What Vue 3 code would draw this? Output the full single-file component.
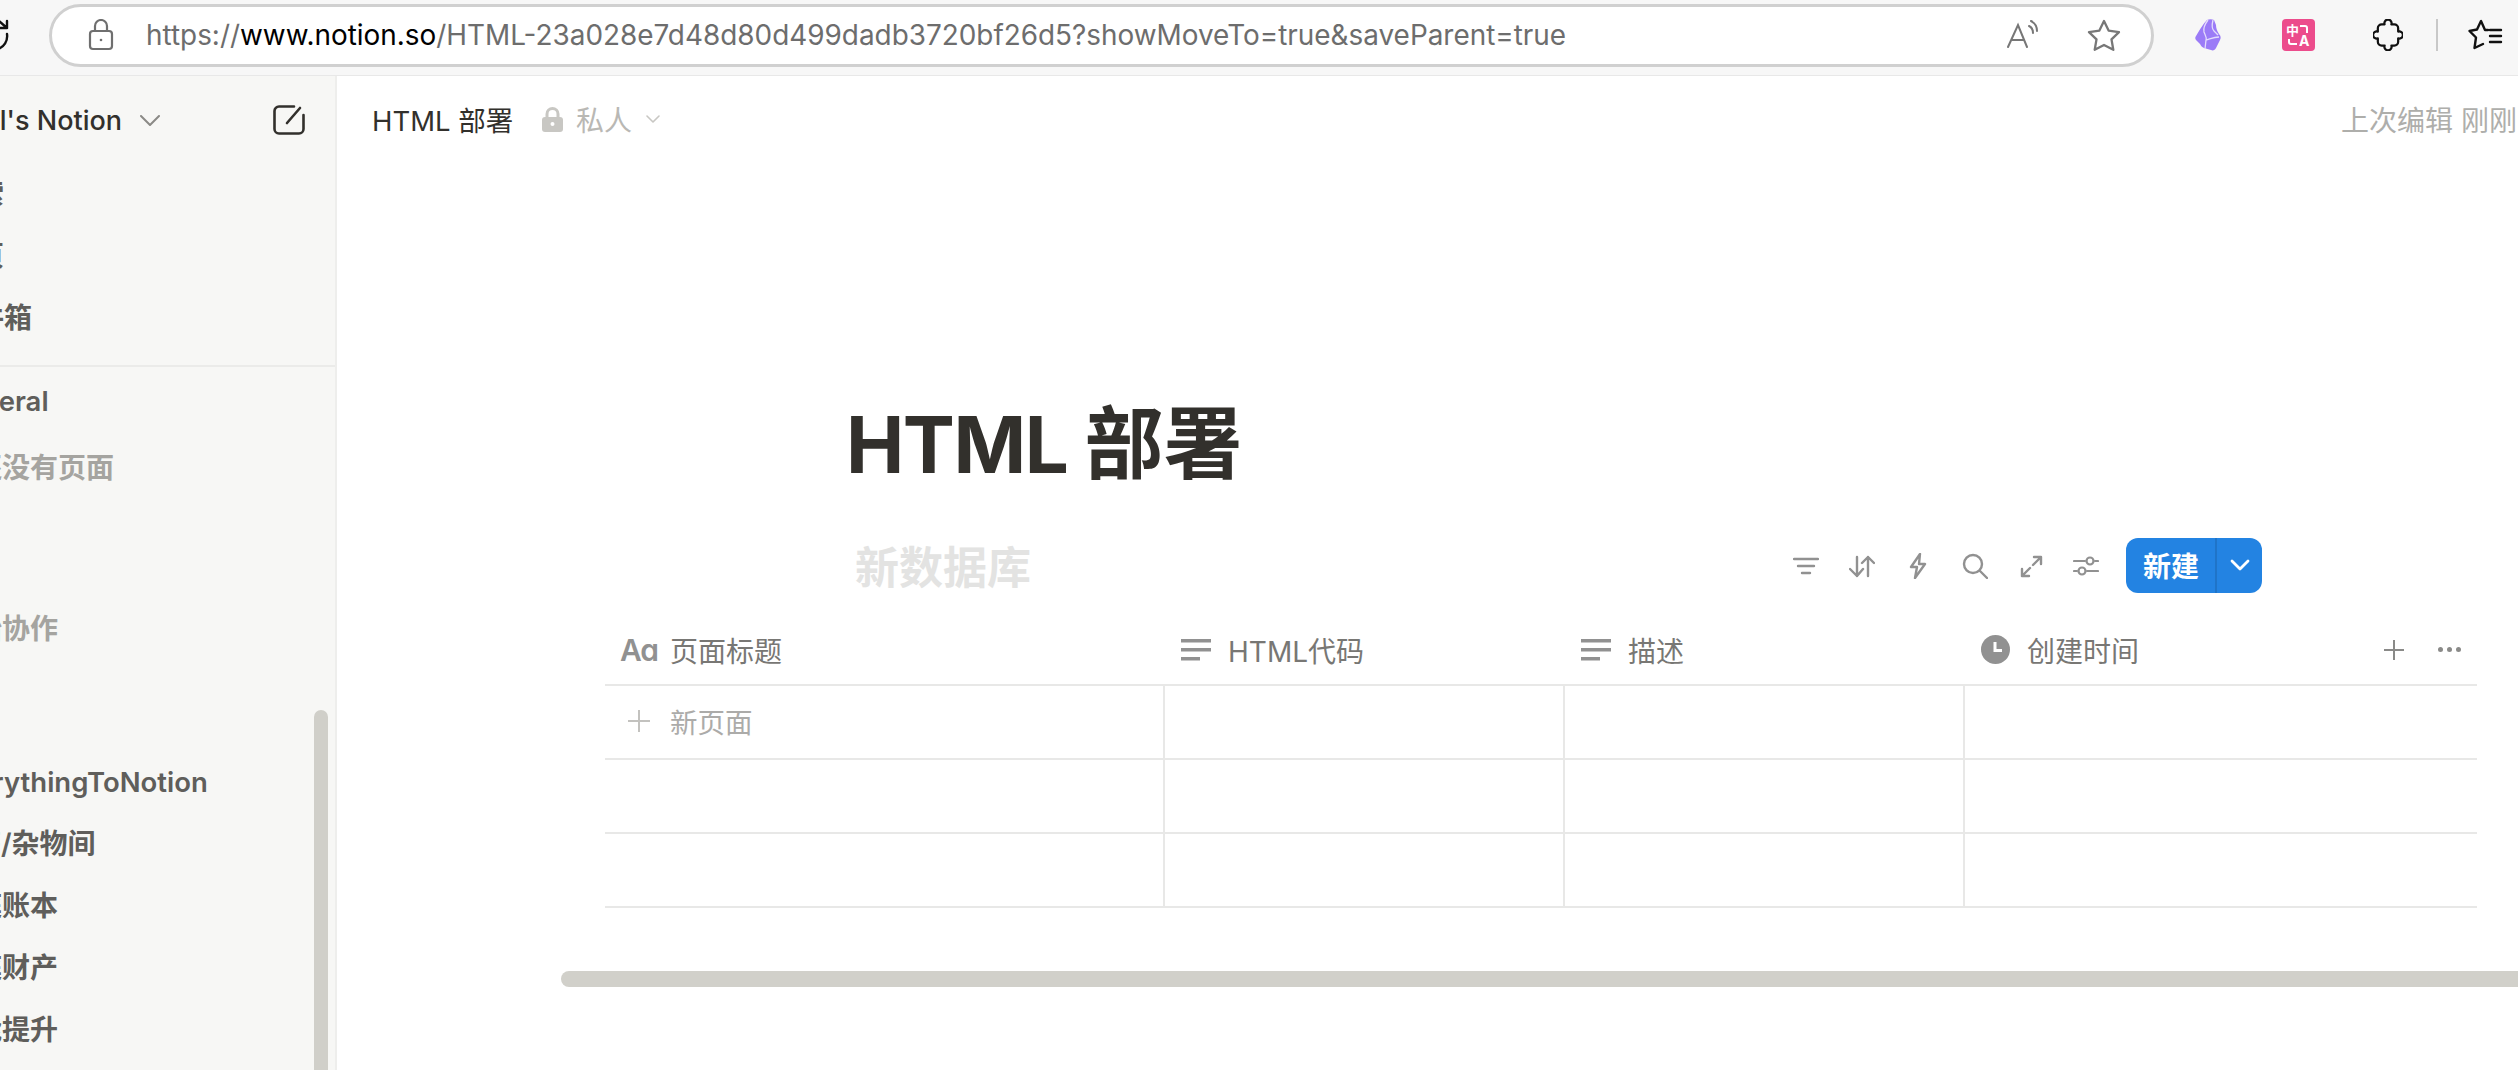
<script setup>
const columns = [
  { name: '页面标题', icon: 'aa', width: 560 },
  { name: 'HTML代码', icon: 'lines', width: 400 },
  { name: '描述', icon: 'lines', width: 400 },
  { name: '创建时间', icon: 'clock', width: 512 }
]
const rows = [0, 1, 2]
const lowerNav = [
  { text: 'EverythingToNotion', kind: 'latin' },
  { text: '书籍/杂物间', kind: 'slash' },
  { text: '家庭账本', kind: '' },
  { text: '家庭财产', kind: '' },
  { text: '技能提升', kind: '' }
]
</script>

<template>
  <div class="page">
    <header class="browser">
      <svg class="reload" width="16" height="30" viewBox="0 0 16 30" fill="none" stroke="#111" stroke-width="2.4" stroke-linecap="round" stroke-linejoin="round">
        <path d="M-1 0 7 7M7 0v7h-8" />
        <path d="M7 13c1 7-3 13-9 15" />
      </svg>
      <div class="pill">
        <svg class="lock" width="26" height="32" viewBox="0 0 26 32" fill="none" stroke="#6f6f6f" stroke-width="2.2">
          <rect x="2" y="12" width="22" height="18" rx="3" />
          <path d="M7 12V7a6 6 0 0 1 12 0v5" />
          <circle cx="13" cy="21" r="1.3" fill="#6f6f6f" stroke="none" />
        </svg>
        <div class="url"><span>https://</span><b>www.notion.so</b><span>/HTML-23a028e7d48d80d499dadb3720bf26d5?showMoveTo=true&amp;saveParent=true</span></div>
        <svg class="read" width="32" height="30" viewBox="0 0 32 30" fill="none" stroke="#777" stroke-width="2" stroke-linecap="round">
          <path d="M1 27 11 5l9 22M5 20h12" />
          <path d="M22 6c2 1 4 3 4 7M24 1c4 2 6 6 6 10" />
        </svg>
        <svg class="star" width="34" height="32" viewBox="0 0 34 32" fill="none" stroke="#777" stroke-width="2.3" stroke-linejoin="round">
          <path d="m17 2 4.600 9.600 10.400 1.500-7.500 7.300 1.800 10.400L17 25.900 7.700 30.800l1.800-10.400L2 13.100l10.400-1.500z" />
        </svg>
      </div>
      <svg class="ext obsidian" width="26" height="32" viewBox="0 0 26 32">
        <path d="M12 1c2-1 5-1 7 0l2 5c0 3 1 6 3 9 2 2 2 4 1 6l-4 8c-1 2-3 3-5 2l-7-2c-2-1-3-2-4-4l-4-4c-1-1-1-3 0-4l3-5c2-3 4-7 8-11z" fill="#9b7bf7" />
        <path d="M13 1c-3 4-5 8-4 12 1 3 3 5 2 8M11 21c4-1 8-3 13-3M11 21l-1 9M18 1c-1 4-2 8 1 11l4 4" fill="none" stroke="#e4dcfc" stroke-width="1.300" />
      </svg>
      <div class="ext translate">
        <svg class="brackets" width="33" height="32" viewBox="0 0 33 32" fill="none" stroke="#fff" stroke-width="2">
          <path d="M18 7h5a2 2 0 0 1 2 2v5" />
          <path d="M7 20v3a2 2 0 0 0 2 2h6" />
        </svg>
        <span class="zh">中</span><span class="en">A</span>
      </div>
      <svg class="ext puzzle" width="30" height="32" viewBox="-1 0 31 32" fill="none" stroke="#111" stroke-width="2.3" stroke-linejoin="round">
        <path d="M8 5h3a3.700 3.700 0 1 1 7 0h3a4 4 0 0 1 4 4v3.500a3.700 3.700 0 1 1 0 7V23a4 4 0 0 1-4 4h-3a3.700 3.700 0 1 1-7 0H8a4 4 0 0 1-4-4v-3.500a3.700 3.700 0 1 1 0-7V9a4 4 0 0 1 4-4z" />
      </svg>
      <span class="bar-divider"></span>
      <svg class="ext favs" width="36" height="32" viewBox="0 0 36 32" fill="none" stroke="#111" stroke-width="2.4" stroke-linejoin="round" stroke-linecap="round">
        <path d="M20 11h-3L13 2 9 10.500 1.500 12 8 18.500 6.500 29l8.500-4" />
        <path d="M22 11h11M22 17h11M22 23h11" />
      </svg>
    </header>

    <div class="app">
      <aside class="sidebar">
        <div class="workspace">
          <div class="workspace-name"><span>Will's Notion</span></div>
          <svg class="ws-chevron" width="20" height="11" viewBox="0 0 20 11" fill="none" stroke="#8b8a86" stroke-width="2" stroke-linecap="round" stroke-linejoin="round"><path d="m1 1 9 9 9-9" /></svg>
          <svg class="compose" width="32" height="30" viewBox="0 0 32 30" fill="none" stroke="#32302c" stroke-width="2.600" stroke-linecap="round">
            <path d="M21 1.500H6A4.500 4.500 0 0 0 1.500 6v18A4.500 4.500 0 0 0 6 28.500h20a4.500 4.500 0 0 0 4.500-4.500V10" />
            <path d="M14 18 27 3" />
          </svg>
        </div>
        <nav class="top-nav">
          <div class="nav-row">搜索</div>
          <div class="nav-row">主页</div>
          <div class="nav-row">收件箱</div>
        </nav>
        <div class="side-divider"></div>
        <div class="nav-row general">General</div>
        <div class="nav-row muted empty">还没有页面</div>
        <div class="nav-row muted collab">开始协作</div>
        <div class="lower">
          <div v-for="item in lowerNav" :key="item.text" class="nav-row" :class="item.kind">{{ item.text }}</div>
        </div>
        <div class="side-thumb"></div>
      </aside>

      <main class="main">
        <div class="topbar">
          <span class="crumb">HTML 部署</span>
          <svg class="crumb-lock" width="21" height="25" viewBox="0 0 21 25">
            <path d="M5 11V7a5.500 5.500 0 0 1 11 0v4" fill="none" stroke="#c8c7c3" stroke-width="3" />
            <rect y="10" width="21" height="15" rx="3" fill="#c8c7c3" />
            <circle cx="10.500" cy="17" r="2" fill="#fff" />
          </svg>
          <span class="private">私人</span>
          <svg class="private-arrow" width="14" height="8" viewBox="0 0 14 8" fill="none" stroke="#c8c7c3" stroke-width="1.600" stroke-linecap="round" stroke-linejoin="round"><path d="m1 1 6 6 6-6" /></svg>
          <span class="edited">上次编辑 刚刚</span>
        </div>

        <h1 class="title">HTML <span class="title-cjk">部署</span></h1>

        <section class="database">
          <div class="db-bar">
            <span class="db-name">新数据库</span>
            <div class="tools">
              <svg width="26" height="18" viewBox="0 0 26 18" fill="none" stroke="#919191" stroke-width="2.400" stroke-linecap="round"><path d="M1 2h24M5 9h16M9 16h8" /></svg>
              <svg class="t-sort" width="26" height="23" viewBox="0 0 26 23" fill="none" stroke="#919191" stroke-width="2.400" stroke-linecap="round" stroke-linejoin="round"><path d="M8 2v19M1 14l7 7 6-7M19 21V2M13 8l6-6 6 6" /></svg>
              <svg class="t-bolt" width="18" height="26" viewBox="0 0 18 26" fill="none" stroke="#919191" stroke-width="2.400" stroke-linejoin="round"><path d="M11 1 2 14h6l-2 11 10-14h-6z" /></svg>
              <svg class="t-search" width="26" height="26" viewBox="0 0 26 26" fill="none" stroke="#919191" stroke-width="2.400" stroke-linecap="round"><circle cx="11" cy="11" r="9" /><path d="m18 18 7 7" /></svg>
              <svg width="23" height="23" viewBox="0 0 23 23" fill="none" stroke="#919191" stroke-width="2.400" stroke-linecap="round" stroke-linejoin="round"><path d="M14 2h7v7M21 2 13 10M10 13l-8 8M2 14v7h7" /></svg>
              <svg class="t-sliders" width="26" height="20" viewBox="0 0 26 20" fill="none" stroke="#919191" stroke-width="2.200" stroke-linecap="round"><path d="M1 5h11M22 5h3M1 15h3M14 15h11" /><circle cx="17" cy="5" r="3.500" /><circle cx="9" cy="15" r="3.500" /></svg>
            </div>
            <div class="new-btn">
              <span class="new-label">新建</span>
              <span class="new-arrow">
                <svg width="20" height="12" viewBox="0 0 20 12" fill="none" stroke="#fff" stroke-width="2.800" stroke-linecap="round" stroke-linejoin="round"><path d="m2 2 8 8 8-8" /></svg>
              </span>
            </div>
          </div>

          <div class="table">
            <div class="head">
              <div v-for="col in columns" :key="col.name" class="head-cell" :style="{ width: col.width + 'px' }">
                <span v-if="col.icon === 'aa'" class="aa">Aa</span>
                <svg v-else-if="col.icon === 'lines'" width="30" height="24" viewBox="0 0 30 24" fill="#919191"><rect width="30" height="3.500" y="1" /><rect width="30" height="3.500" y="10" /><rect width="19" height="3.500" y="19" /></svg>
                <svg v-else width="29" height="29" viewBox="0 0 29 29"><circle cx="14.500" cy="14.500" r="14.500" fill="#919191" /><path d="M14 7v8.500h7" fill="none" stroke="#fff" stroke-width="3" /></svg>
                <span>{{ col.name }}</span>
              </div>
              <div class="head-actions">
                <svg width="20" height="20" viewBox="0 0 20 20" stroke="#8a8a88" stroke-width="2"><path d="M10 0v20M0 10h20" /></svg>
                <span class="dots"><i></i><i></i><i></i></span>
              </div>
            </div>
            <div v-for="row in rows" :key="row" class="row">
              <div v-for="col in columns" :key="col.name" class="cell" :style="{ width: col.width + 'px' }">
                <template v-if="row === 0 && col.icon === 'aa'">
                  <svg width="22" height="22" viewBox="0 0 22 22" stroke="#c3c2bf" stroke-width="2"><path d="M11 0v22M0 11h22" /></svg>
                  <span class="new-page">新页面</span>
                </template>
              </div>
            </div>
          </div>
        </section>
        <div class="h-thumb"></div>
      </main>
    </div>
  </div>
</template>

<style>
html, body { margin: 0; background: #fff; overflow: hidden; }
</style>

<style scoped>
.page {
  width: 2518px;
  height: 1070px;
  overflow: hidden;
  font-family: Inter, "Noto Sans CJK SC", sans-serif;
  display: flex;
  flex-direction: column;
}
.browser {
  height: 75px;
  flex: none;
  display: flex;
  align-items: center;
  background: #f7f7f7;
  border-bottom: 1px solid #e8e8e8;
  box-sizing: content-box;
}
.reload { margin-top: -4px; flex: none; overflow: visible; }
.pill {
  width: 2105px;
  height: 63px;
  box-sizing: border-box;
  margin: -5px 0 0 33px;
  flex: none;
  background: #fff;
  border: 3px solid #d0d0d0;
  border-radius: 32px;
  display: flex;
  align-items: center;
  padding-left: 36px;
}
.url {
  margin-left: 32px;
  width: 1861px;
  font-size: 27.900px;
  white-space: nowrap;
  color: #6d6d6d;
}
.url b { font-weight: 400; color: #000; }
.star { margin-left: 48px; }
.ext { flex: none; margin-top: -5px; }
.obsidian { margin-left: 41px; }
.translate {
  margin-left: 61px;
  width: 33px;
  height: 32px;
  border-radius: 4px;
  background: #ec4c8c;
  color: #fff;
  position: relative;
  font-weight: 700;
  overflow: hidden;
}
.brackets { position: absolute; left: 0; top: 0; }
.zh { position: absolute; left: 4px; top: 4px; font-size: 13px; line-height: 15px; }
.en { position: absolute; left: 17px; top: 15px; font-size: 14px; line-height: 14px; }
.puzzle { margin-left: 58px; }
.bar-divider { width: 2px; height: 32px; background: #c8c8c8; margin: -5px 0 0 33px; flex: none; }
.favs { margin-left: 30px; }

.app { flex: 1; display: flex; min-height: 0; }
.sidebar {
  width: 337px;
  flex: none;
  box-sizing: border-box;
  background: #f7f7f5;
  border-right: 2px solid #eeeeec;
  overflow: hidden;
  position: relative;
  color: #5f5e5b;
}
.workspace {
  height: 88px;
  display: flex;
  align-items: center;
  margin-left: -84px;
  color: #32302c;
  font-size: 27px;
  font-weight: 500;
  white-space: nowrap;
}
.workspace-name { width: 206px; flex: none; display: flex; justify-content: flex-end; }
.workspace-name span { flex: none; }
.ws-chevron { margin-left: 18px; flex: none; }
.compose { margin-left: 113px; flex: none; }
.top-nav { margin-top: -1px; padding-bottom: 16px; }
.nav-row {
  height: 62px;
  line-height: 62px;
  margin-left: -54px;
  font-size: 28px;
  font-weight: 600;
  white-space: nowrap;
}
.top-nav .nav-row { margin-left: -52px; }
.nav-row.latin { font-size: 27.500px; margin-left: -56px; }
.nav-row.slash { margin-left: -55px; }
.side-divider { height: 2px; background: #ebebe9; }
.general { margin-left: -55px; margin-top: 3px; font-size: 27.500px; }
.muted { color: #a5a4a0; }
.empty { margin-left: -26px; margin-top: 5px; }
.collab { margin-top: 99px; }
.lower { margin-top: 91px; }
.side-thumb {
  position: absolute;
  left: 314px;
  top: 634px;
  width: 14px;
  height: 500px;
  border-radius: 7px;
  background: #d0cfc9;
}
.main { flex: 1; min-width: 0; overflow: hidden; }
.topbar {
  height: 86px;
  padding: 0 0 2px 35px;
  display: flex;
  align-items: center;
  font-size: 28px;
  white-space: nowrap;
}
.crumb { color: #32302c; width: 170px; flex: none; font-size: 27.500px; }
.crumb-lock { flex: none; margin-right: 13px; }
.private { color: #b9b8b4; width: 70px; flex: none; }
.private-arrow { flex: none; }
.edited { color: #aeaeab; margin-left: 1681px; flex: none; }
.title {
  margin: 236px 0 0 509px;
  height: 88px;
  line-height: 88px;
  font-size: 78px;
  font-weight: 700;
  letter-spacing: -1.400px;
  color: #32302c;
  white-space: nowrap;
}
.title-cjk { font-size: 79px; letter-spacing: 0; }
.database { margin: 0 0 0 268px; }
.db-bar {
  height: 64px;
  margin-top: 45px;
  display: flex;
  align-items: center;
  width: 1657px;
}
.db-name {
  margin-left: 250px;
  font-size: 44px;
  font-weight: 700;
  color: #e3e3e2;
  width: 938px;
}
.tools { display: flex; align-items: center; gap: 32px; width: 333px; padding-top: 2px; box-sizing: border-box; }
.t-sort { margin-left: -2px; }
.t-bolt { margin-left: 2px; }
.t-search { margin-left: 3px; }
.t-sliders { margin-left: -2px; }
.new-btn {
  width: 136px;
  height: 55px;
  border-radius: 12px;
  background: #2383e2;
  color: #fff;
  display: flex;
  align-items: center;
  font-size: 28px;
  font-weight: 700;
}
.new-label { width: 89px; flex: none; box-sizing: border-box; padding-left: 17px; white-space: nowrap; }
.new-arrow {
  flex: 1;
  height: 100%;
  border-left: 2px solid #1f74c8;
  display: flex;
  align-items: center;
  justify-content: center;
}
.table { width: 1872px; margin-top: 18px; }
.head {
  display: flex;
  height: 69px;
  border-bottom: 2px solid #e8e8e7;
  position: relative;
}
.head-cell {
  display: flex;
  align-items: center;
  gap: 17px;
  padding-left: 16px;
  box-sizing: border-box;
  flex: none;
  color: #787774;
  font-size: 28px;
  white-space: nowrap;
}
.aa {
  font-weight: 600;
  font-size: 30px;
  letter-spacing: -1px;
  color: #919191;
  width: 34px;
  margin-left: -1px;
  margin-right: -1px;
  font-feature-settings: "cv11";
}
.head-actions {
  position: absolute;
  right: 16px;
  top: 0;
  height: 100%;
  display: flex;
  align-items: center;
  gap: 34px;
}
.dots { display: flex; gap: 4px; }
.dots i { width: 5px; height: 5px; border-radius: 50%; background: #8a8a88; }
.row { display: flex; height: 72px; border-bottom: 2px solid #e8e8e7; }
.cell {
  flex: none;
  box-sizing: border-box;
  border-right: 2px solid #e8e8e7;
  display: flex;
  align-items: center;
  gap: 20px;
  padding: 0 0 2px 23px;
}
.cell:last-child { border-right: 0; }
.new-page { color: #acaba9; font-size: 27.500px; }
.h-thumb {
  width: 2100px;
  height: 16px;
  margin: 63px 0 0 224px;
  border-radius: 8px;
  background: #d1d0ca;
}
</style>
